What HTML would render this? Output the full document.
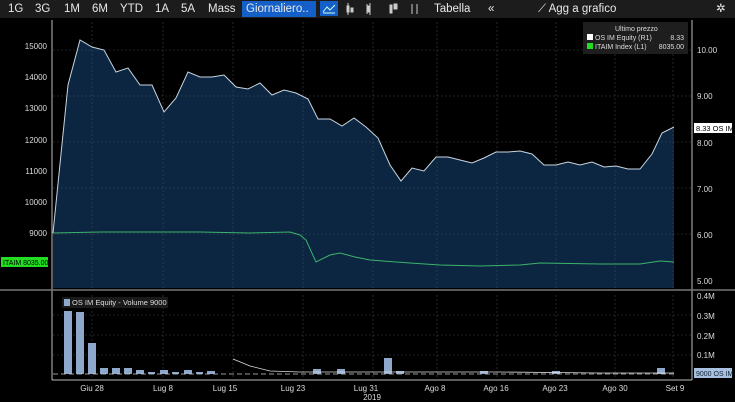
<!DOCTYPE html>
<html><head><meta charset="utf-8"><style>
html,body{margin:0;padding:0;background:#000;width:735px;height:402px;overflow:hidden;font-family:"Liberation Sans",sans-serif}
.tb{position:absolute;left:0;top:0;width:735px;height:18px;background:#1c1c1c;color:#e8e8e8;font-size:11.5px}
.tb span{position:absolute;top:2px;line-height:14px}
</style></head><body>
<div class="tb">
<span style="left:8px">1G</span><span style="left:35px">3G</span><span style="left:64px">1M</span><span style="left:92px">6M</span><span style="left:120px">YTD</span><span style="left:155px">1A</span><span style="left:181px">5A</span><span style="left:208px">Mass</span>
<span style="left:242px;top:1px;background:#1560c8;padding:1px 4px;width:66px;height:14px">Giornaliero..</span>
<span style="left:320px;top:1px;background:#1560c8;width:18px;height:15px"></span>
<svg style="position:absolute;left:320px;top:1px" width="18" height="15"><polyline points="3,11 7,6 10,9 15,4" fill="none" stroke="#cfe" stroke-width="1"/><line x1="3" y1="12" x2="15" y2="12" stroke="#cfe"/></svg>
<svg style="position:absolute;left:345px;top:3px" width="80" height="12" stroke="#ccc" fill="#ccc"><rect x="2" y="3" width="2" height="6"/><line x1="3" y1="0" x2="3" y2="12"/><rect x="6" y="5" width="2" height="4"/><line x1="22" y1="1" x2="22" y2="11"/><line x1="25" y1="0" x2="25" y2="12"/><rect x="23" y="3" width="2" height="6"/><rect x="45" y="2" width="2" height="8"/><rect x="49" y="1" width="3" height="5"/><line x1="67" y1="1" x2="67" y2="11"/><line x1="72" y1="1" x2="72" y2="11"/></svg>
<span style="left:434px">Tabella</span>
<span style="left:488px">«</span>
<span style="left:538px">⟋ Agg a grafico</span>
<span style="left:716px">✲</span>
</div>
<svg style="position:absolute;left:0;top:18px" width="735" height="384" viewBox="0 18 735 384" font-family="Liberation Sans,sans-serif" font-size="8" fill="#ddd">
<!-- fill -->
<polygon fill="#0c2642" points="53,233 68,85 80,40 92,47 104,50 116,72 128,68 140,85 152,85 164,112 176,98 188,72 200,77 212,77 224,75 236,87 248,89 260,83 272,95 284,90 296,93 308,99 318,119 330,119 342,126 354,118 366,127 378,138 390,165 401,181 412,168 424,171 436,157 448,157 460,160 472,163 484,158 496,152 508,152 520,151 532,154 544,165 556,165 568,162 580,165 592,162 604,167 616,166 628,169 640,169 652,154 662,133 674,127 674,288 53,288"/>
<g stroke="#3a4550" stroke-width="0.6" stroke-dasharray="2,2">
<line x1="53" y1="50" x2="692" y2="50"/><line x1="53" y1="96" x2="692" y2="96"/><line x1="53" y1="142" x2="692" y2="142"/><line x1="53" y1="188" x2="692" y2="188"/><line x1="53" y1="234" x2="692" y2="234"/>
<line x1="92" y1="22" x2="92" y2="288"/><line x1="163" y1="22" x2="163" y2="288"/><line x1="233" y1="22" x2="233" y2="288"/><line x1="303" y1="22" x2="303" y2="288"/><line x1="373" y1="22" x2="373" y2="288"/><line x1="437" y1="22" x2="437" y2="288"/><line x1="497" y1="22" x2="497" y2="288"/><line x1="556" y1="22" x2="556" y2="288"/><line x1="615" y1="22" x2="615" y2="288"/><line x1="673" y1="22" x2="673" y2="288"/>
<line x1="53" y1="315" x2="692" y2="315"/><line x1="53" y1="335" x2="692" y2="335"/><line x1="53" y1="355" x2="692" y2="355"/>
<line x1="92" y1="295" x2="92" y2="378"/><line x1="163" y1="295" x2="163" y2="378"/><line x1="233" y1="295" x2="233" y2="378"/><line x1="303" y1="295" x2="303" y2="378"/><line x1="373" y1="295" x2="373" y2="378"/><line x1="437" y1="295" x2="437" y2="378"/><line x1="497" y1="295" x2="497" y2="378"/><line x1="556" y1="295" x2="556" y2="378"/><line x1="615" y1="295" x2="615" y2="378"/><line x1="673" y1="295" x2="673" y2="378"/>
</g>
<polyline fill="none" stroke="#c8d4e0" stroke-width="1" points="53,233 68,85 80,40 92,47 104,50 116,72 128,68 140,85 152,85 164,112 176,98 188,72 200,77 212,77 224,75 236,87 248,89 260,83 272,95 284,90 296,93 308,99 318,119 330,119 342,126 354,118 366,127 378,138 390,165 401,181 412,168 424,171 436,157 448,157 460,160 472,163 484,158 496,152 508,152 520,151 532,154 544,165 556,165 568,162 580,165 592,162 604,167 616,166 628,169 640,169 652,154 662,133 674,127"/>
<polyline fill="none" stroke="#3bb36a" stroke-width="1" points="53,233 100,232 150,232 200,232 250,233 290,232 300,235 306,240 316,262 330,255 340,253 355,257 370,260 410,263 440,265 480,266 520,265 540,263 600,264 640,264 660,261 674,262"/>
<!-- axes -->
<line x1="52" y1="20" x2="52" y2="380" stroke="#bbb" stroke-width="1"/>
<line x1="692" y1="20" x2="692" y2="380" stroke="#bbb" stroke-width="1"/>
<line x1="0" y1="290" x2="735" y2="290" stroke="#777" stroke-width="1.5"/>
<line x1="52" y1="380" x2="692" y2="380" stroke="#bbb" stroke-width="1"/>
<g text-anchor="end">
<text x="47" y="49">15000</text><text x="47" y="80">14000</text><text x="47" y="111">13000</text><text x="47" y="143">12000</text><text x="47" y="174">11000</text><text x="47" y="205">10000</text><text x="47" y="236">9000</text>
</g>
<g>
<text x="697" y="53">10.00</text><text x="697" y="99">9.00</text><text x="697" y="192">7.00</text><text x="697" y="238">6.00</text><text x="697" y="284">5.00</text>
<text x="697" y="299">0.4M</text><text x="697" y="319">0.3M</text><text x="697" y="339">0.2M</text><text x="697" y="358">0.1M</text>
</g>
<rect x="694" y="123" width="38" height="10" fill="#fff"/><text x="696" y="131" fill="#000" font-size="7.5">8.33 OS IM</text>
<text x="697" y="146">8.00</text>
<rect x="1" y="257" width="47" height="10" fill="#22dd22"/><text x="3" y="265" fill="#000" font-size="7">ITAIM 8035.00</text>
<rect x="694" y="368" width="38" height="10" fill="#a8c0e0"/><text x="696" y="376" fill="#123" font-size="7">9000 OS IM</text>
<!-- legend -->
<rect x="583" y="22" width="105" height="32" fill="#1e1e1e"/>
<text x="615" y="31" font-size="7">Ultimo prezzo</text>
<rect x="587" y="34" width="6" height="6" fill="#fff"/><text x="595" y="40" font-size="7">OS IM Equity  (R1)</text><text x="684" y="40" font-size="7" text-anchor="end">8.33</text>
<rect x="587" y="43" width="6" height="6" fill="#2d2"/><text x="595" y="49" font-size="7">ITAIM Index  (L1)</text><text x="684" y="49" font-size="7" text-anchor="end">8035.00</text>
<!-- volume -->
<g fill="#8ea8cc" stroke="#cdd">
<rect x="64" y="311" width="8" height="63" stroke-width="0"/><rect x="76" y="312" width="8" height="62" stroke-width="0"/><rect x="88" y="343" width="8" height="31" stroke-width="0"/>
<rect x="100" y="368" width="8" height="6" stroke-width="0"/><rect x="112" y="368" width="8" height="6" stroke-width="0"/><rect x="124" y="368" width="8" height="6" stroke-width="0"/><rect x="136" y="370" width="8" height="4" stroke-width="0"/><rect x="148" y="372" width="7" height="2" stroke-width="0"/><rect x="160" y="370" width="8" height="4" stroke-width="0"/><rect x="172" y="372" width="7" height="2" stroke-width="0"/><rect x="184" y="370" width="8" height="4" stroke-width="0"/><rect x="196" y="372" width="7" height="2" stroke-width="0"/><rect x="207" y="371" width="8" height="3" stroke-width="0"/>
<rect x="313" y="369" width="8" height="5" stroke-width="0"/><rect x="337" y="369" width="8" height="5" stroke-width="0"/><rect x="384" y="358" width="8" height="16" stroke-width="0"/><rect x="396" y="371" width="8" height="3" stroke-width="0"/><rect x="480" y="371" width="8" height="3" stroke-width="0"/><rect x="552" y="371" width="8" height="3" stroke-width="0"/><rect x="657" y="368" width="8" height="6" stroke-width="0"/>
</g>
<polyline fill="none" stroke="#ddd" stroke-width="0.8" points="233,359 250,366 270,371 300,372 400,372 500,372 600,373 674,373"/>
<line x1="53" y1="374" x2="674" y2="374" stroke="#ccc" stroke-width="0.8" stroke-dasharray="5,3"/>
<rect x="62" y="297" width="106" height="11" fill="#1a1a1a"/>
<rect x="64" y="299" width="6" height="7" fill="#8ea8cc"/>
<text x="72" y="305" font-size="7.5">OS IM Equity - Volume 9000</text>
<!-- x labels -->
<g text-anchor="middle">
<text x="92" y="391">Giu 28</text><text x="163" y="391">Lug 8</text><text x="225" y="391">Lug 15</text><text x="293" y="391">Lug 23</text><text x="366" y="391">Lug 31</text><text x="372" y="400">2019</text><text x="435" y="391">Ago 8</text><text x="496" y="391">Ago 16</text><text x="555" y="391">Ago 23</text><text x="615" y="391">Ago 30</text><text x="675" y="391">Set 9</text>
</g>
</svg>
</body></html>
